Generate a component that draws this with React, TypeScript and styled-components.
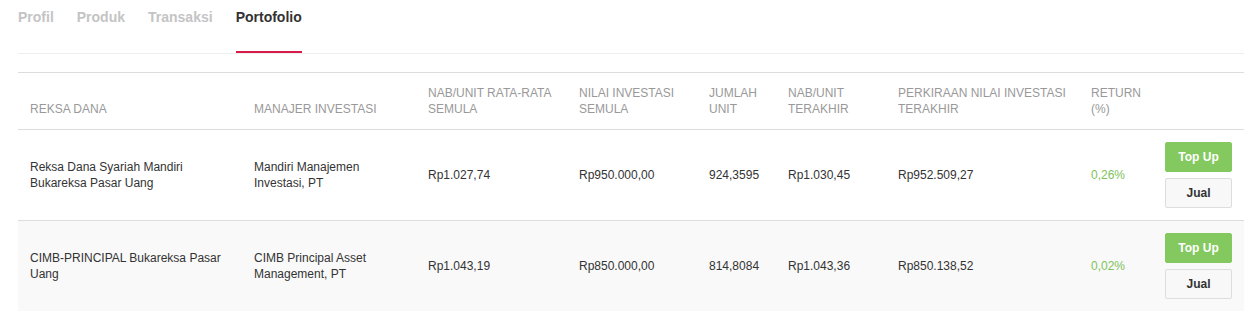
import React from 'react';
import styled, { createGlobalStyle } from 'styled-components';

const GlobalStyle = createGlobalStyle`
  body {
    margin: 0;
    background: #fff;
    font-family: 'Liberation Sans', Arial, sans-serif;
  }
`;

interface Holding {
  fund: string;
  manager: string;
  navStart: string;
  investStart: string;
  units: string;
  navLast: string;
  investLast: string;
  ret: string;
}

const holdings: Holding[] = [
  {
    fund: 'Reksa Dana Syariah Mandiri Bukareksa Pasar Uang',
    manager: 'Mandiri Manajemen Investasi, PT',
    navStart: 'Rp1.027,74',
    investStart: 'Rp950.000,00',
    units: '924,3595',
    navLast: 'Rp1.030,45',
    investLast: 'Rp952.509,27',
    ret: '0,26%',
  },
  {
    fund: 'CIMB-PRINCIPAL Bukareksa Pasar Uang',
    manager: 'CIMB Principal Asset Management, PT',
    navStart: 'Rp1.043,19',
    investStart: 'Rp850.000,00',
    units: '814,8084',
    navLast: 'Rp1.043,36',
    investLast: 'Rp850.138,52',
    ret: '0,02%',
  },
];

const tabs = ['Profil', 'Produk', 'Transaksi', 'Portofolio'];
const columns = [
  { label: 'Reksa Dana', width: 224 },
  { label: 'Manajer Investasi', width: 174 },
  { label: 'NAB/Unit Rata-rata Semula', width: 151 },
  { label: 'Nilai Investasi Semula', width: 130 },
  { label: 'Jumlah Unit', width: 79 },
  { label: 'NAB/Unit Terakhir', width: 110 },
  { label: 'Perkiraan Nilai Investasi Terakhir', width: 193 },
  { label: 'Return (%)', width: 74 },
  { label: '', width: 91 },
];

const Page = styled.div`
  padding: 0 13px 0 18px;
`;

const TabBar = styled.div`
  display: flex;
  gap: 23px;
  height: 54px;
  box-sizing: border-box;
  border-bottom: 1px solid #eee;
`;

const Tab = styled.div<{ $active?: boolean }>`
  height: 53px;
  box-sizing: border-box;
  padding-top: 7px;
  font-size: 14px;
  line-height: 20px;
  font-weight: bold;
  color: ${(p) => (p.$active ? '#333' : '#c4c4c4')};
  border-bottom: 2px solid ${(p) => (p.$active ? '#d81b4b' : 'transparent')};
  cursor: pointer;
`;

const Table = styled.table`
  margin-top: 18px;
  width: 100%;
  table-layout: fixed;
  border-collapse: collapse;
  border-top: 1px solid #ddd;
`;

const Th = styled.th`
  text-align: left;
  vertical-align: bottom;
  font-weight: normal;
  font-size: 12px;
  line-height: 16px;
  color: #999;
  text-transform: uppercase;
  padding: 12px 8px 12px 12px;
  border-bottom: 1px solid #ddd;
`;

const Row = styled.tr<{ $striped?: boolean }>`
  background: ${(p) => (p.$striped ? '#f9f9f9' : '#fff')};
`;

const Td = styled.td<{ $positive?: boolean }>`
  vertical-align: middle;
  font-size: 12px;
  line-height: 16px;
  color: ${(p) => (p.$positive ? '#7cc35a' : '#333')};
  padding: 12px 8px 12px 12px;
  border-bottom: 1px solid #ddd;
`;

const Actions = styled.div`
  display: flex;
  flex-direction: column;
  gap: 6px;
`;

const Button = styled.button<{ $primary?: boolean }>`
  width: 67px;
  height: 30px;
  padding: 0;
  font-family: inherit;
  font-size: 12px;
  font-weight: bold;
  border-radius: 2px;
  cursor: pointer;
  color: ${(p) => (p.$primary ? '#fff' : '#333')};
  background: ${(p) => (p.$primary ? '#84c960' : '#f8f8f8')};
  border: 1px solid ${(p) => (p.$primary ? '#84c960' : '#ddd')};
`;

export default function App() {
  return (
    <Page>
      <GlobalStyle />
      <TabBar>
        {tabs.map((t) => (
          <Tab key={t} $active={t === 'Portofolio'}>
            {t}
          </Tab>
        ))}
      </TabBar>
      <Table>
        <colgroup>
          {columns.map((c, i) => (
            <col key={i} style={{ width: c.width }} />
          ))}
        </colgroup>
        <thead>
          <tr>
            {columns.map((c, i) => (
              <Th key={i}>{c.label}</Th>
            ))}
          </tr>
        </thead>
        <tbody>
          {holdings.map((h, i) => (
            <Row key={h.fund} $striped={i % 2 === 1}>
              <Td>{h.fund}</Td>
              <Td>{h.manager}</Td>
              <Td>{h.navStart}</Td>
              <Td>{h.investStart}</Td>
              <Td>{h.units}</Td>
              <Td>{h.navLast}</Td>
              <Td>{h.investLast}</Td>
              <Td $positive>{h.ret}</Td>
              <Td>
                <Actions>
                  <Button $primary>Top Up</Button>
                  <Button>Jual</Button>
                </Actions>
              </Td>
            </Row>
          ))}
        </tbody>
      </Table>
    </Page>
  );
}
